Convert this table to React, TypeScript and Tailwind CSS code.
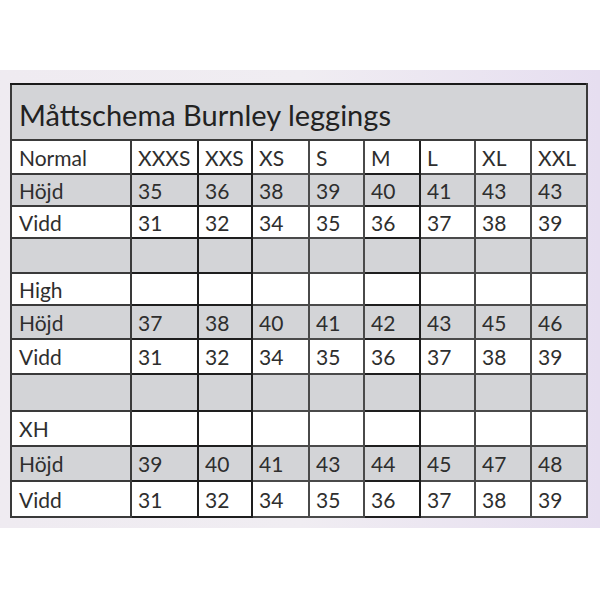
import React from "react";

type Row = { label: string; values: string[]; shade: boolean; h: string };

const sizes = ["XXXS", "XXS", "XS", "S", "M", "L", "XL", "XXL"];
const blank = ["", "", "", "", "", "", "", ""];

const rows: Row[] = [
  { label: "Normal", values: sizes, shade: false, h: "h-[34px]" },
  { label: "Höjd", values: ["35", "36", "38", "39", "40", "41", "43", "43"], shade: true, h: "h-[32px]" },
  { label: "Vidd", values: ["31", "32", "34", "35", "36", "37", "38", "39"], shade: false, h: "h-[32px]" },
  { label: "", values: blank, shade: true, h: "h-[35px]" },
  { label: "High", values: blank, shade: false, h: "h-[32px]" },
  { label: "Höjd", values: ["37", "38", "40", "41", "42", "43", "45", "46"], shade: true, h: "h-[34px]" },
  { label: "Vidd", values: ["31", "32", "34", "35", "36", "37", "38", "39"], shade: false, h: "h-[35px]" },
  { label: "", values: blank, shade: true, h: "h-[37px]" },
  { label: "XH", values: blank, shade: false, h: "h-[35px]" },
  { label: "Höjd", values: ["39", "40", "41", "43", "44", "45", "47", "48"], shade: true, h: "h-[35px]" },
  { label: "Vidd", values: ["31", "32", "34", "35", "36", "37", "38", "39"], shade: false, h: "h-[36px]" },
];

const colWidths = ["w-[120px]", "w-[67px]", "w-[54px]", "w-[57px]", "w-[55px]", "w-[56px]", "w-[55px]", "w-[56px]", "w-[56px]"];

export default function App() {
  return (
    <div
      className="w-[600px] h-[600px] bg-white flex flex-col"
      style={{ fontFamily: "Lato, 'Noto Sans', sans-serif" }}
    >
      <div className="h-[70px]" />
      <div className="h-[458px] bg-gradient-to-r from-[#efebf1] via-[#f0edf2] to-[#e6def0] pl-[10px] pt-[13px]">
        <table className="table-fixed border-collapse w-[576px] text-[#2e2e2e]">
          <colgroup>
            {colWidths.map((w, i) => (
              <col key={i} className={w} />
            ))}
          </colgroup>
          <tbody>
            <tr className="h-[56px] bg-[#d3d4d7]">
              <td
                colSpan={9}
                className="border-2 border-[#3a3a3a] border-t-[#1a1a1a] pl-[7px] pt-[4px] text-[29px] leading-none text-[#222]"
              >
                Måttschema Burnley leggings
              </td>
            </tr>
            {rows.map((r, i) => (
              <tr key={i} className={`${r.h} ${r.shade ? "bg-[#d3d4d7]" : "bg-white"}`}>
                <td className="border-2 border-[#3a3a3a] pl-[7px] text-[21px] leading-none">{r.label}</td>
                {r.values.map((v, j) => (
                  <td
                    key={j}
                    className={`border-2 ${j === 0 || j === 4 || j === 1 ? "border-[#1e1e1e]" : "border-[#4a4a4a]"} pl-[6px] text-[21px] leading-none`}
                  >
                    {v}
                  </td>
                ))}
              </tr>
            ))}
          </tbody>
        </table>
      </div>
    </div>
  );
}
